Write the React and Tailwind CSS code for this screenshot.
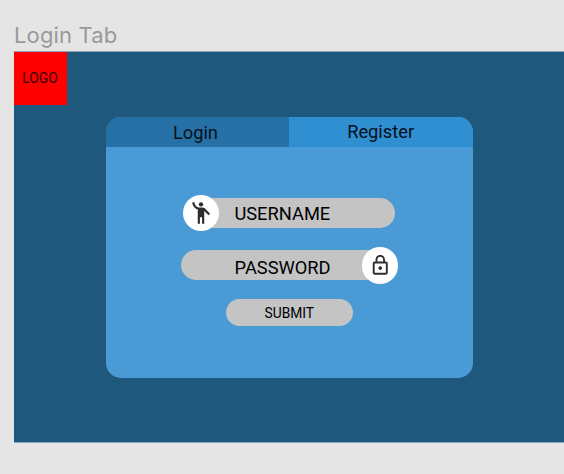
function PersonIcon() {
  return (
    <svg viewBox="0 0 24 24" className="size-[26px] shrink-0 fill-[#2d2d30]">
      <circle cx="12" cy="4" r="2" />
      <path d="M15.89 8.11C15.5 7.72 14.83 7 13.53 7h-2.54C8.24 6.99 6 4.75 6 2H4c0 3.16 2.11 5.84 5 6.71V22h2v-6h2v6h2V10.05L18.95 14l1.41-1.41-4.47-4.48z" />
    </svg>
  );
}

function LockIcon() {
  return (
    <svg viewBox="0 0 24 24" className="size-[22.5px] shrink-0 fill-[#2d2d30]">
      <path d="M12 17c1.1 0 2-.9 2-2s-.9-2-2-2-2 .9-2 2 .9 2 2 2zm6-9h-1V6c0-2.76-2.24-5-5-5S7 3.24 7 6v2H6c-1.1 0-2 .9-2 2v10c0 1.1.9 2 2 2h12c1.1 0 2-.9 2-2V10c0-1.1-.9-2-2-2zM8.9 6c0-1.71 1.39-3.1 3.1-3.1s3.1 1.39 3.1 3.1v2H8.9V6zM18 20H6V10h12v10z" />
    </svg>
  );
}

export default function App() {
  return (
    <div className="h-[474px] w-[564px] overflow-hidden bg-[#e5e5e5] pl-[14px] font-['Roboto',sans-serif] text-black">
      <h1 className="h-[51px] pt-[20px] font-['Inter',sans-serif] text-[22px] leading-[30px] tracking-[0.15px] text-[#999999]">
        Login Tab
      </h1>
      <main className="flex h-[392px] items-start border-t border-b border-t-[#8aa3b3] border-b-[#86a9bf] bg-[#1e587c]">
        <div className="flex h-[53px] w-[53px] shrink-0 items-center justify-center bg-[#ff0000] text-[13.8px] text-[#300000]">
          <span className="-ml-[1px]">LOGO</span>
        </div>
        <section className="mt-[65px] ml-[38.6px] h-[261px] w-[367.4px] shrink-0 overflow-hidden rounded-[15px] bg-[#4a9bd5]">
          <div className="flex h-[30px] text-[18.3px] leading-[30px] text-[#04101c]">
            <button className="w-1/2 bg-[#2770a5] pr-[4px] pt-[1px]">Login</button>
            <button className="w-1/2 bg-[#2f8fd1] pr-[1px] pb-[1px]">Register</button>
          </div>
          <form className="pt-[48px] text-[18.3px]">
            <div className="ml-[77.3px] flex h-[36px] items-center">
              <div className="z-10 flex size-[36px] shrink-0 items-center justify-center rounded-full bg-white">
                <PersonIcon />
              </div>
              <div className="-ml-[34px] flex h-[30px] w-[210px] items-center rounded-full bg-[#c4c4c4] pt-[1px] pl-[49.5px]">
                USERNAME
              </div>
            </div>
            <div className="mt-[16px] ml-[75px] flex h-[36.5px] items-center">
              <div className="flex h-[30px] w-[210px] items-center rounded-full bg-[#c4c4c4] pt-[4px] pl-[54px]">
                PASSWORD
              </div>
              <div className="z-10 -ml-[29px] flex size-[36.5px] shrink-0 items-center justify-center rounded-full bg-white">
                <LockIcon />
              </div>
            </div>
            <button className="mt-[15.5px] ml-[120px] flex h-[27px] w-[127.4px] items-center justify-center rounded-full bg-[#c4c4c4] pt-[1px] text-[13.8px]">
              SUBMIT
            </button>
          </form>
        </section>
      </main>
    </div>
  );
}
